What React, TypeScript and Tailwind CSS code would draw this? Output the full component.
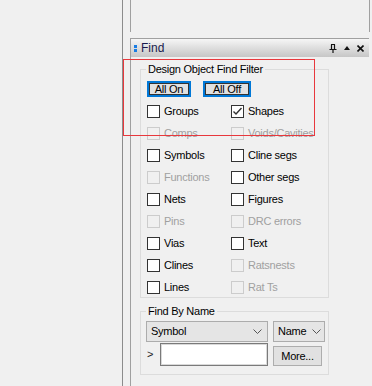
import React from "react";

type Item = { label: string; disabled?: boolean; checked?: boolean };

const rows: [Item, Item][] = [
  [{ label: "Groups" }, { label: "Shapes", checked: true }],
  [{ label: "Comps", disabled: true }, { label: "Voids/Cavities", disabled: true }],
  [{ label: "Symbols" }, { label: "Cline segs" }],
  [{ label: "Functions", disabled: true }, { label: "Other segs" }],
  [{ label: "Nets" }, { label: "Figures" }],
  [{ label: "Pins", disabled: true }, { label: "DRC errors", disabled: true }],
  [{ label: "Vias" }, { label: "Text" }],
  [{ label: "Clines" }, { label: "Ratsnests", disabled: true }],
  [{ label: "Lines" }, { label: "Rat Ts", disabled: true }],
];

function Check({ item }: { item: Item }) {
  return (
    <div className="flex items-center h-[20px]">
      <span
        className={
          item.disabled
            ? "w-[13px] h-[13px] border border-[#cccccc] bg-[#f0f0f0] shrink-0"
            : "w-[13px] h-[13px] border border-[#333333] bg-white shrink-0 flex items-center justify-center"
        }
      >
        {item.checked && (
          <svg width="11" height="11" viewBox="0 0 11 11">
            <path d="M1.5 5.5 L4 8 L9.5 2" stroke="#333" strokeWidth="1.4" fill="none" />
          </svg>
        )}
      </span>
      <span className={item.disabled ? "ml-[4px] text-[#a0a0a0]" : "ml-[4px] text-black"}>{item.label}</span>
    </div>
  );
}

function Chevron() {
  return (
    <svg width="9" height="6" viewBox="0 0 9 6">
      <path d="M0.5 0.5 L4.5 4.5 L8.5 0.5" stroke="#555" strokeWidth="1" fill="none" />
    </svg>
  );
}

export default function App() {
  return (
    <div className="relative w-[372px] h-[386px] overflow-hidden bg-[#f0f0f0] flex font-['Liberation_Sans',Arial,sans-serif] text-[11px] leading-[13px] tracking-[-0.25px]">
      <div className="w-[122px] shrink-0" />
      <div className="w-[1px] shrink-0 bg-[#8c8c8c]" />
      <div className="w-[7px] shrink-0" />

      <div className="flex flex-col w-[242px]">
        {/* upper panel edges */}
        <div className="h-[32px] w-[240px] border-l border-r border-[#a0a0a0]" />
        <div className="h-[6px]" />

        {/* header */}
        <div className="h-[19px] w-[239px] border-t border-l border-[#a0a0a0] bg-gradient-to-b from-[#f6f6f6] to-[#c6c6c6] flex items-center">
          <div className="ml-[3px] flex flex-col gap-[1px]">
            <span className="w-[3px] h-[3px] bg-[#1a7de3]" />
            <span className="w-[3px] h-[3px] bg-[#1a7de3]" />
          </div>
          <span className="ml-[4px] text-[12px] text-[#1a1a4e] tracking-normal">Find</span>
          <div className="ml-auto mr-[5px] flex items-center gap-[7px]">
            <svg width="8" height="9" viewBox="0 0 8 9">
              <path d="M2 0.5 H6 M2.5 0.5 V5 M5.5 0.5 V5 M0.5 5.5 H7.5 M4 5.5 V9" stroke="#111" strokeWidth="1.2" fill="none" />
            </svg>
            <svg width="6" height="4" viewBox="0 0 6 4">
              <path d="M3 0 L6 4 L0 4 Z" fill="#111" />
            </svg>
            <svg width="7" height="7" viewBox="0 0 7 7">
              <path d="M0.5 0.5 L6.5 6.5 M6.5 0.5 L0.5 6.5" stroke="#111" strokeWidth="1.6" />
            </svg>
          </div>
        </div>

        {/* body */}
        <div className="flex-1 border-l border-[#a0a0a0] pl-[9px]">
          <fieldset className="mt-[6px] w-[189px] border border-[#dcdcdc] pb-0">
            <legend className="ml-[5px] px-[2px] leading-[13px]">Design Object Find Filter</legend>
            <div className="pl-[6px]">
              <div className="mt-[5px] flex gap-[12px]">
                <button className="w-[44px] h-[16px] border-2 border-[#0078d7] bg-[#e1e1e1] p-0 flex">
                  <span className="flex-1 border border-[#333] flex items-center justify-center leading-[11px]">All On</span>
                </button>
                <button className="w-[48px] h-[16px] border-2 border-[#0078d7] bg-[#e1e1e1] p-0 flex">
                  <span className="flex-1 border border-[#333] flex items-center justify-center leading-[11px]">All Off</span>
                </button>
              </div>
              <div className="mt-[4px] grid grid-cols-[84px_1fr] gap-y-[2px]">
                {rows.map(([a, b]) => (
                  <React.Fragment key={a.label}>
                    <Check item={a} />
                    <Check item={b} />
                  </React.Fragment>
                ))}
              </div>
            </div>
          </fieldset>

          <fieldset className="mt-[7px] w-[189px] border border-[#dcdcdc] pl-[5px] pb-[8px]">
            <legend className="ml-[0px] px-[2px] leading-[13px]">Find By Name</legend>
            <div className="mt-[3px] flex gap-[5px]">
              <div className="w-[122px] h-[21px] border border-[#acacac] bg-[#e5e5e5] flex items-center pl-[4px] pr-[5px]">
                <span>Symbol</span>
                <span className="ml-auto flex"><Chevron /></span>
              </div>
              <div className="w-[52px] h-[21px] border border-[#acacac] bg-[#e5e5e5] flex items-center pl-[4px] pr-[3px]">
                <span>Name</span>
                <span className="ml-auto flex"><Chevron /></span>
              </div>
            </div>
            <div className="mt-[1px] flex items-center">
              <span className="w-[14px] pl-[1px] text-[#222]">&gt;</span>
              <div className="w-[108px] h-[23px] border border-[#7a7a7a] bg-white shadow-[inset_0_0_0_1px_#d9d9d9]" />
              <div className="ml-[5px] mt-[3px] w-[49px] h-[20px] border border-[#adadad] bg-[#e1e1e1] flex items-center justify-center">
                More...
              </div>
            </div>
          </fieldset>
        </div>
      </div>

      {/* red selection outline */}
      <div className="absolute left-[123px] top-[59px] w-[192px] h-[77px] border border-[#e8383d] pointer-events-none" />
    </div>
  );
}
